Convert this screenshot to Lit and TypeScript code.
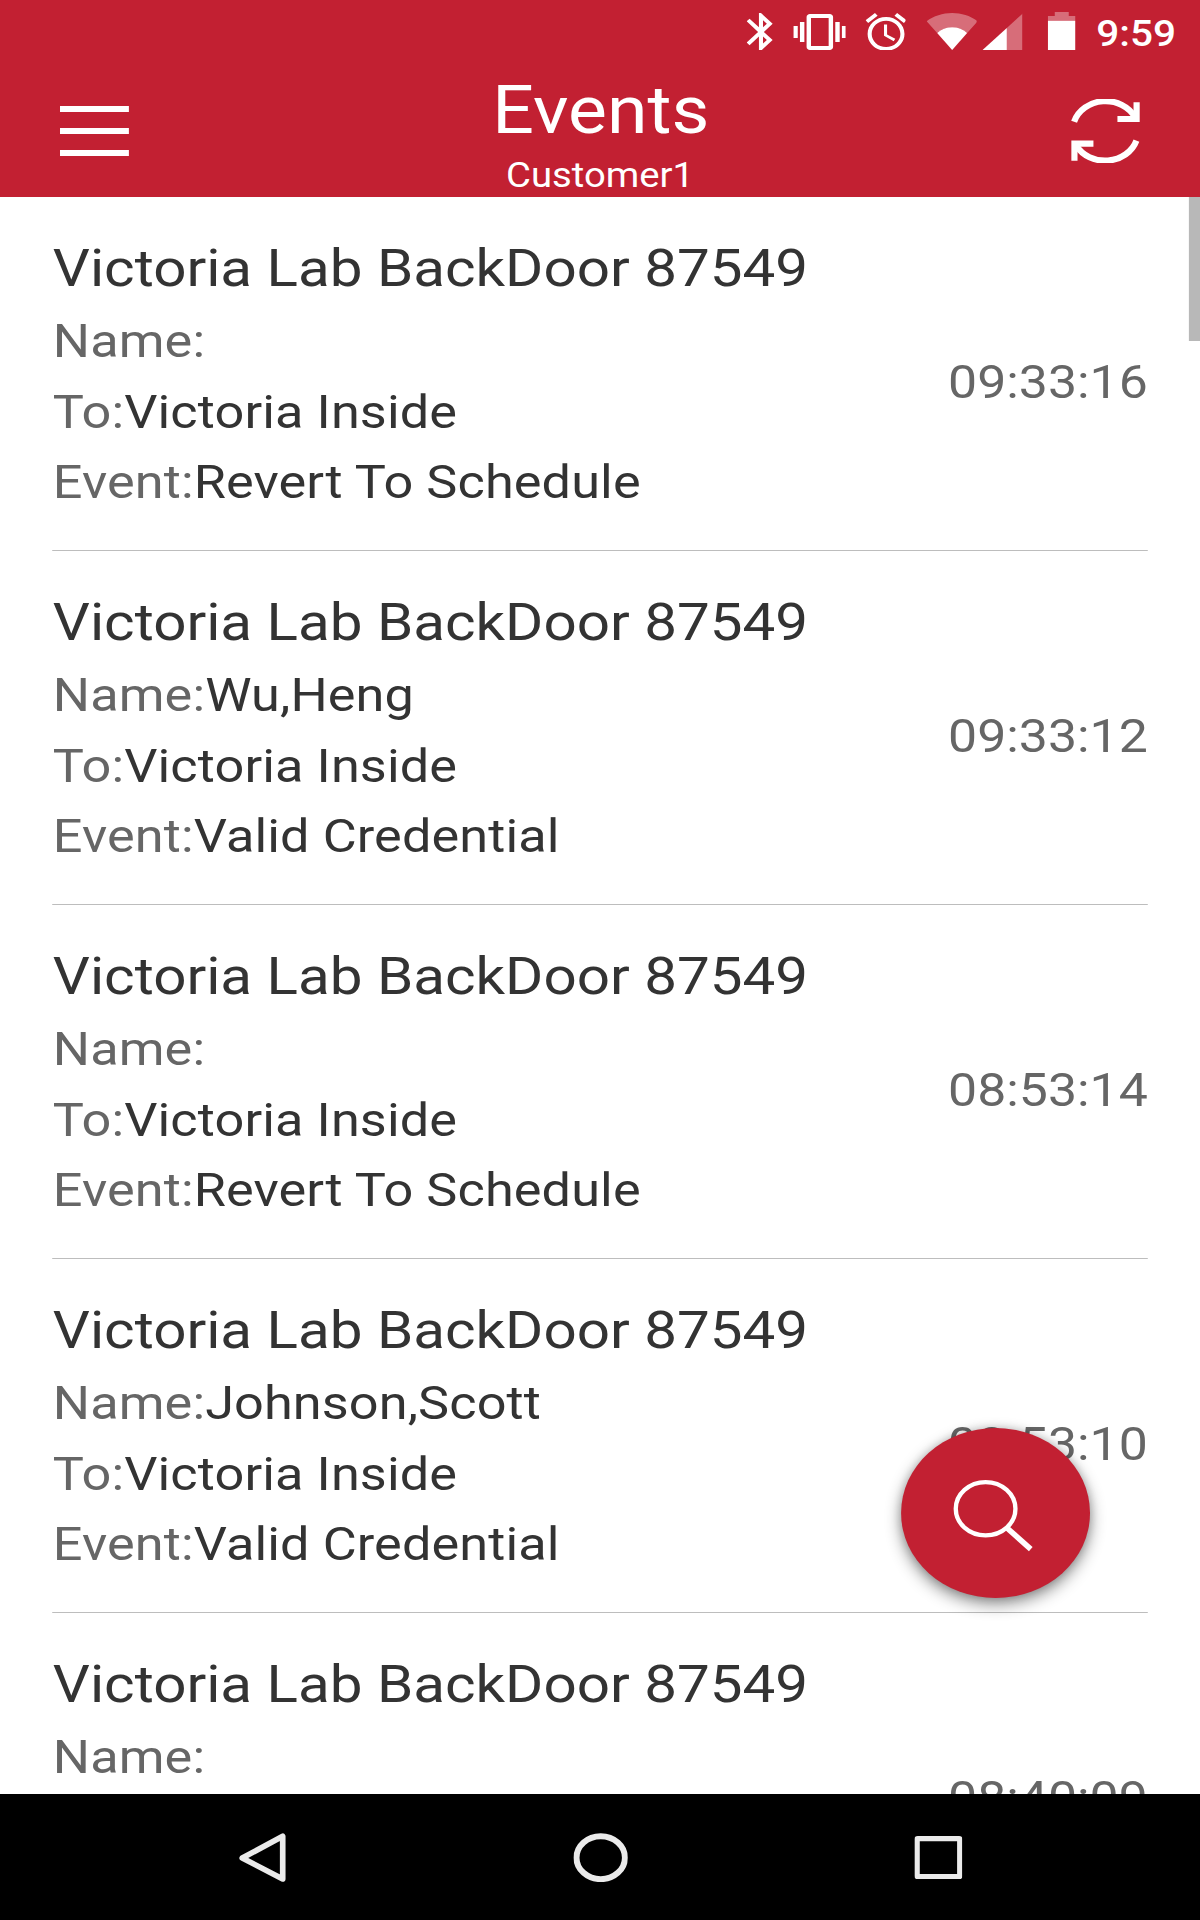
import { LitElement, html, css, nothing } from "lit";
import { customElement, property } from "lit/decorators.js";

interface DoorEvent {
  door: string;
  name: string;
  to?: string;
  event?: string;
  time: string;
}

const EVENTS: DoorEvent[] = [
  { door: "Victoria Lab BackDoor 87549", name: "", to: "Victoria Inside", event: "Revert To Schedule", time: "09:33:16" },
  { door: "Victoria Lab BackDoor 87549", name: "Wu,Heng", to: "Victoria Inside", event: "Valid Credential", time: "09:33:12" },
  { door: "Victoria Lab BackDoor 87549", name: "", to: "Victoria Inside", event: "Revert To Schedule", time: "08:53:14" },
  { door: "Victoria Lab BackDoor 87549", name: "Johnson,Scott", to: "Victoria Inside", event: "Valid Credential", time: "08:53:10" },
  { door: "Victoria Lab BackDoor 87549", name: "", time: "08:40:09" },
];

@customElement("status-bar")
class StatusBar extends LitElement {
  static styles = css`
    :host {
      display: flex;
      align-items: flex-start;
      justify-content: flex-end;
      height: 66px;
      padding-right: 21.6px;
      box-sizing: border-box;
      color: #fff;
    }
    svg { display: block; flex: none; fill: #fff; margin-top: 12.7px; height: 37.8px; }
    .bluetooth { width: 23.4px; margin-right: 18px; }
    .vibrate { width: 47.7px; height: 36px; margin-top: 14px; margin-right: 17.1px; }
    .alarm { width: 36.9px; margin-right: 18.1px; }
    .wifi { width: 45.9px; height: 37px; margin-right: 4.2px; }
    .cell { width: 36.9px; height: 37.3px; margin-right: 22.2px; }
    .battery { width: 24.9px; height: 38px; margin-top: 12px; margin-right: 19px; }
    .dim { opacity: 0.35; }
    .clock { font-size: 36.5px; font-weight: 500; line-height: 67px; }
  `;
  render() {
    return html`
      <svg class="bluetooth" viewBox="5 2 12.71 20" preserveAspectRatio="none">
        <path d="M17.71 7.71L12 2h-1v7.59L6.41 5 5 6.41 10.59 12 5 17.59 6.41 19 11 14.41V22h1l5.71-5.71-4.3-4.29 4.3-4.29zM13 5.83l1.88 1.88L13 9.59V5.83zm1.88 10.46L13 18.17v-3.76l1.88 1.88z" />
      </svg>
      <svg class="vibrate" viewBox="0 3 24 18" preserveAspectRatio="none">
        <path d="M0 15h2V9H0v6zm3 2h2V7H3v10zm19-8v6h2V9h-2zm-3 8h2V7h-2v10zM16.5 3h-9C6.67 3 6 3.67 6 4.5v15c0 .83.67 1.5 1.5 1.5h9c.83 0 1.5-.67 1.5-1.5v-15c0-.83-.67-1.5-1.5-1.5zM16 19H8V5h8v14z" />
      </svg>
      <svg class="alarm" viewBox="2 1.86 20 20.14" preserveAspectRatio="none">
        <path d="M12.5 8H11v6l4.75 2.85.75-1.23-4-2.37V8zm9.5-2.28l-4.6-3.86-1.29 1.53 4.6 3.86L22 5.72zM7.88 3.39L6.6 1.86 2 5.71l1.29 1.53 4.59-3.85zM12 4c-4.97 0-9 4.03-9 9s4.02 9 9 9c4.97 0 9-4.03 9-9s-4.03-9-9-9zm0 16c-3.87 0-7-3.13-7-7s3.13-7 7-7 7 3.13 7 7-3.13 7-7 7z" />
      </svg>
      <svg class="wifi" viewBox="0 0 51 37" preserveAspectRatio="none">
        <path class="dim" d="M0 8.2C7 3 16 0 25.5 0S44 3 51 8.2L40.5 20C36.5 16.2 31.5 14.3 25.5 14.3S14.5 16.2 10.5 20z" />
        <path d="M10.5 20C14.5 16.2 19.5 14.3 25.5 14.3S36.5 16.2 40.5 20L25.5 37z" />
      </svg>
      <svg class="cell" viewBox="0 0 41 37.3" preserveAspectRatio="none">
        <path class="dim" d="M24.6 14.9L41 0v37.3H24.6z" />
        <path d="M0 37.3L24.6 14.9v22.4z" />
      </svg>
      <svg class="battery" viewBox="0 0 27.7 38" preserveAspectRatio="none">
        <path class="dim" d="M0 4h7V0h14v4h6.7v4.8H0z" />
        <path d="M0 8.8h27.7V38H0z" />
      </svg>
      <span class="clock">9:59</span>
    `;
  }
}

@customElement("app-header")
class AppHeader extends LitElement {
  static styles = css`
    :host {
      display: grid;
      grid-template-columns: 200px 1fr 200px;
      height: 131px;
      color: #fff;
      text-align: center;
    }
    .side { display: flex; align-items: flex-start; padding: 0 54.3px; }
    .end { justify-content: flex-end; }
    .menu { display: flex; flex-direction: column; gap: 16px; padding-top: 40px; }
    .bar { width: 62px; height: 6px; background: #fff; }
    .refresh { width: 61.8px; height: 64.3px; margin-top: 33px; fill: none; stroke: #fff; stroke-width: 18.5; }
    .title { padding: 4px 0 0 1.5px; font-size: 66px; line-height: 82px; }
    .subtitle { padding-top: 3px; font-size: 34.4px; line-height: 40px; }
  `;
  render() {
    return html`
      <div class="side">
        <div class="menu">
          <div class="bar"></div>
          <div class="bar"></div>
          <div class="bar"></div>
        </div>
      </div>
      <div>
        <div class="title">Events</div>
        <div class="subtitle">Customer1</div>
      </div>
      <div class="side end">
        <svg class="refresh" viewBox="213 87 206 193" preserveAspectRatio="none">
          <path d="M222 155A99 88 0 0 1 405 142" />
          <path d="M409.5 97V147H352" />
          <path d="M409 212A99 88 0 0 1 228 226" />
          <path d="M280 221H223V272" />
        </svg>
      </div>
    `;
  }
}

@customElement("event-row")
class EventRow extends LitElement {
  @property({ attribute: false }) item!: DoorEvent;
  static styles = css`
    :host {
      display: flex;
      align-items: flex-start;
      justify-content: space-between;
      height: 354px;
      box-sizing: border-box;
      border-bottom: 1.5px solid #bdbdbd;
      color: #666;
      font-size: 47px;
      white-space: nowrap;
    }
    .details { padding: 34px 0 0 0.5px; }
    .door { color: #333; font-size: 52.5px; line-height: 75px; }
    .line { line-height: 70.7px; letter-spacing: 0.1px; }
    .value { color: #333; }
    .time { padding-top: 157px; font-size: 46.6px; line-height: 56px; }
  `;
  private line(label: string, value?: string) {
    return value === undefined
      ? nothing
      : html`<div class="line">${label}:<span class="value">${value}</span></div>`;
  }
  render() {
    const { door, name, to, event, time } = this.item;
    return html`
      <div class="details">
        <div class="door">${door}</div>
        ${this.line("Name", name)} ${this.line("To", to)} ${this.line("Event", event)}
      </div>
      <div class="time">${time}</div>
    `;
  }
}

@customElement("nav-bar")
class NavBar extends LitElement {
  static styles = css`
    :host {
      display: flex;
      align-items: center;
      justify-content: space-between;
      height: 126px;
      padding: 1px 214.2px 0 215.4px;
      box-sizing: border-box;
      background: #000;
    }
    svg { display: block; fill: none; stroke: #ebebeb; stroke-linejoin: round; }
    .back { width: 42.6px; height: 49.3px; }
    .home { width: 49.3px; height: 49.3px; }
    .recent { width: 43.2px; height: 43.3px; }
  `;
  render() {
    return html`
      <svg class="back" viewBox="0 0 142 148" preserveAspectRatio="none">
        <path stroke-width="17" d="M131.5 10V138L10 75z" />
      </svg>
      <svg class="home" viewBox="0 0 164 148" preserveAspectRatio="none">
        <ellipse stroke-width="18" cx="82" cy="74" rx="72.5" ry="64.5" />
      </svg>
      <svg class="recent" viewBox="0 0 144 130" preserveAspectRatio="none">
        <rect stroke-width="16" x="8" y="8" width="128" height="114" rx="2" />
      </svg>
    `;
  }
}

@customElement("app-root")
class AppRoot extends LitElement {
  static styles = css`
    :host {
      display: block;
      width: 1200px;
      height: 1920px;
      overflow: hidden;
      font-family: Roboto, sans-serif;
    }
    /* The 1080-wide phone layout is stretched across the 1200px viewport. */
    .screen {
      position: relative;
      display: flex;
      flex-direction: column;
      width: 1080px;
      height: 1920px;
      background: #fff;
      transform: scaleX(1.11111);
      transform-origin: 0 0;
    }
    .top { flex: none; background: #c22032; }
    .list { flex: 1; min-height: 0; overflow: hidden; padding: 0 47px; position: relative; }
    .thumb { position: absolute; top: 0; right: 0; width: 10.4px; height: 144px; background: #b8b8b8; }
    .fab {
      position: absolute;
      left: 811.2px;
      top: 1428px;
      width: 169.8px;
      height: 169.5px;
      display: flex;
      border-radius: 50%;
      background: #c22032;
      box-shadow: 0 6px 15px rgba(0, 0, 0, 0.45), 0 0 8px rgba(0, 0, 0, 0.16);
    }
    .fab svg { width: 100%; height: 100%; fill: none; stroke: #fff; }
  `;
  render() {
    return html`
      <div class="screen">
        <div class="top">
          <status-bar></status-bar>
          <app-header></app-header>
        </div>
        <div class="list">
          ${EVENTS.map((item) => html`<event-row .item=${item}></event-row>`)}
          <div class="thumb"></div>
        </div>
        <nav-bar></nav-bar>
        <div class="fab">
          <svg viewBox="64 84 566 508" preserveAspectRatio="none">
            <ellipse stroke-width="13" cx="317.5" cy="326" rx="89.5" ry="80" />
            <path stroke-width="16.5" d="M380 382L453 447" />
          </svg>
        </div>
      </div>
    `;
  }
}
